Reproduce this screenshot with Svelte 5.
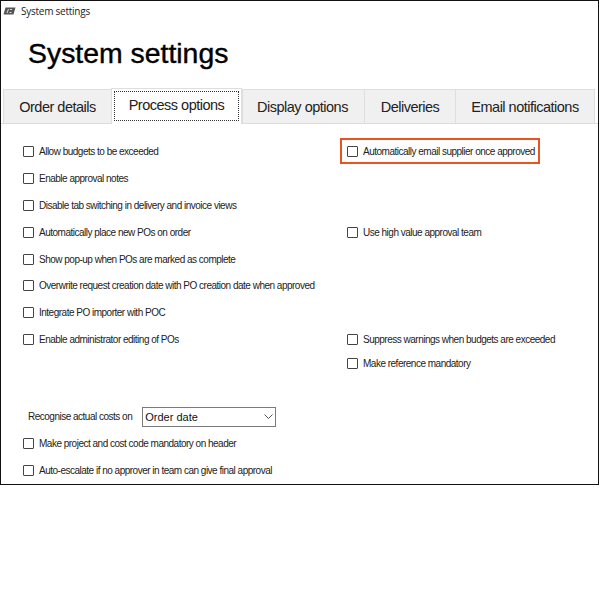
<script lang="ts">
  const tabs = ['Order details', 'Process options', 'Display options', 'Deliveries', 'Email notifications'];
  const activeTab = 'Process options';

  const options = [
    { label: 'Allow budgets to be exceeded', row: 1, col: 1 },
    { label: 'Automatically email supplier once approved', row: 1, col: 2, highlight: true },
    { label: 'Enable approval notes', row: 2, col: 1 },
    { label: 'Disable tab switching in delivery and invoice views', row: 3, col: 1 },
    { label: 'Automatically place new POs on order', row: 4, col: 1 },
    { label: 'Use high value approval team', row: 4, col: 2 },
    { label: 'Show pop-up when POs are marked as complete', row: 5, col: 1 },
    { label: 'Overwrite request creation date with PO creation date when approved', row: 6, col: 1 },
    { label: 'Integrate PO importer with POC', row: 7, col: 1 },
    { label: 'Enable administrator editing of POs', row: 8, col: 1 },
    { label: 'Suppress warnings when budgets are exceeded', row: 8, col: 2 },
    { label: 'Make reference mandatory', row: 9, col: 2 }
  ];
</script>

<div class="window">
  <div class="titlebar">
    <svg class="app-icon" width="13" height="8" viewBox="0 0 13 8">
      <path d="M2.5 0.5H12.5L10.5 7.5H0.5Z" fill="#555" />
      <path d="M4 6L5.5 2M7 2.5H9M6.5 5.5H8.5" stroke="#ddd" stroke-width="1" fill="none" />
    </svg>
    <span>System settings</span>
  </div>

  <h1>System settings</h1>

  <div class="tabs">
    {#each tabs as tab}
      <div class="tab" class:active={tab === activeTab}>
        <span class="tab-label">{tab}</span>
      </div>
    {/each}
  </div>

  <div class="panel">
    <div class="options">
      {#each options as opt}
        <label class="check" class:highlight={opt.highlight} style="grid-row: {opt.row}; grid-column: {opt.col}">
          <span class="box"></span>
          <span>{opt.label}</span>
        </label>
      {/each}
    </div>

    <div class="costs">
      <span>Recognise actual costs on</span>
      <div class="select">
        <span>Order date</span>
        <svg width="9" height="5" viewBox="0 0 9 5"><path d="M0.5 0.5L4.5 4.5L8.5 0.5" stroke="#555" fill="none" /></svg>
      </div>
    </div>

    <div class="bottom">
      <label class="check"><span class="box"></span><span>Make project and cost code mandatory on header</span></label>
      <label class="check"><span class="box"></span><span>Auto-escalate if no approver in team can give final approval</span></label>
    </div>
  </div>
</div>

<style>
  :global(body) {
    background: #fff;
  }

  .window {
    width: 599px;
    height: 485px;
    box-sizing: border-box;
    border: 1px solid #111;
    background: #fff;
    font-family: "Liberation Sans", Arial, sans-serif;
    color: #222;
    overflow: hidden;
  }

  .titlebar {
    height: 20px;
    display: flex;
    align-items: center;
    gap: 5px;
    padding-left: 2px;
    font-size: 10px;
    letter-spacing: -0.25px;
    font-family: "Open Sans", "Liberation Sans", sans-serif;
  }

  h1 {
    margin: 16px 0 0 27px;
    height: 52px;
    font-size: 28.4px;
    line-height: 32px;
    font-weight: 400;
    color: #000;
    -webkit-text-stroke: 0.4px #000;
  }

  .tabs {
    display: flex;
    height: 35px;
    padding-left: 2px;
    border-bottom: 1px solid #dcdcdc;
    box-sizing: border-box;
  }

  .tab {
    height: 34px;
    box-sizing: border-box;
    border: 1px solid #dedede;
    border-bottom: none;
    margin-right: -1px;
    background: #f0f0f0;
    display: flex;
    align-items: center;
    justify-content: center;
    font-size: 14.5px;
    letter-spacing: -0.5px;
    color: #222;
  }

  .tab:nth-child(1) { width: 109px; }
  .tab:nth-child(3) { width: 123px; margin-left: 1px; padding-right: 2px; }
  .tab:nth-child(4) { width: 92px; }
  .tab:nth-child(5) { width: 140px; }

  .tab.active {
    width: 131px;
    height: 36px;
    margin-top: -1px;
    background: #fff;
    position: relative;
    padding: 2px;
  }

  .tab.active .tab-label {
    flex: 1;
    align-self: stretch;
    display: flex;
    align-items: center;
    justify-content: center;
    border: 1px dotted #333;
    padding-bottom: 2px;
    margin-bottom: 1px;
  }

  .panel {
    padding: 14px 0 0 22px;
    font-size: 10px;
    letter-spacing: -0.5px;
  }

  .options {
    display: grid;
    grid-template-columns: 324px 1fr;
    grid-template-rows: 27px 27px 27px 27px 26px 27px 27px 24px 20px;
    height: 236px;
  }

  .check {
    display: flex;
    align-items: center;
    align-self: start;
    gap: 5px;
    height: 26px;
    white-space: nowrap;
  }

  .check.highlight {
    justify-self: start;
    margin-left: -7px;
    padding: 0 3px 0 5px;
    border: 2px solid #e8541e;
    box-sizing: border-box;
  }

  .box {
    width: 9px;
    height: 9px;
    border: 1px solid #444;
    border-radius: 1px;
    background: #fff;
    flex: none;
  }

  .costs {
    display: flex;
    align-items: center;
    gap: 10px;
    margin: 32px 0 0 5px;
    height: 21px;
  }

  .select {
    width: 134px;
    height: 20px;
    box-sizing: border-box;
    border: 1px solid #7a7a7a;
    display: flex;
    align-items: center;
    justify-content: space-between;
    padding: 0 2px;
    font-size: 11px;
    letter-spacing: 0;
    color: #111;
  }

  .bottom {
    display: flex;
    flex-direction: column;
    gap: 1px;
    margin-top: 3px;
  }
</style>
